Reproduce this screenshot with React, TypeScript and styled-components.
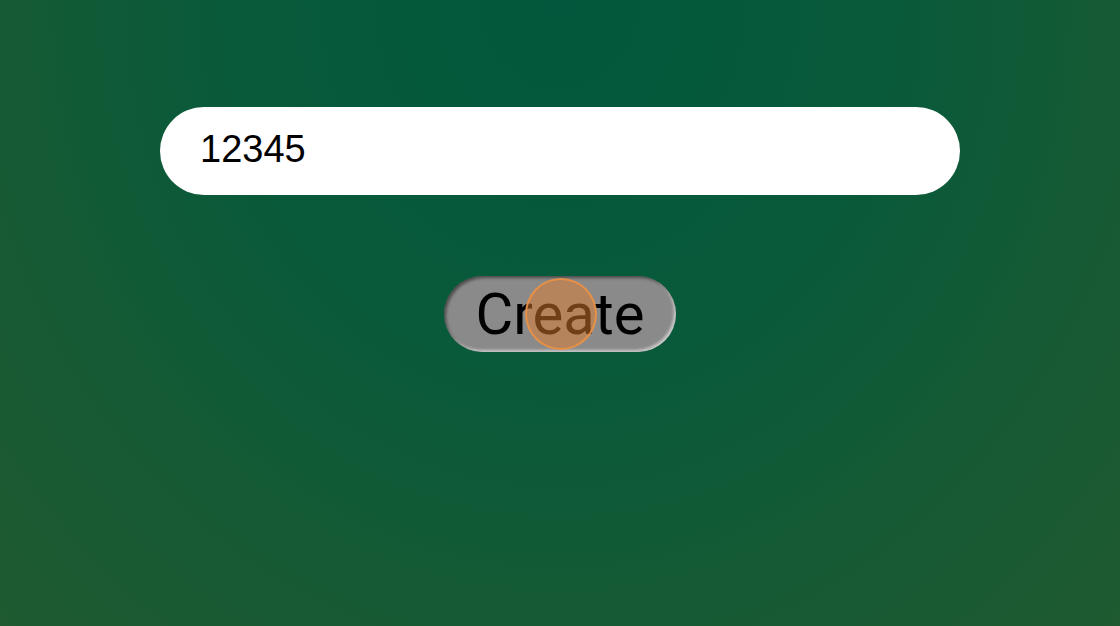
import styled, { createGlobalStyle } from 'styled-components';

const GlobalStyle = createGlobalStyle`
  html, body {
    margin: 0;
    padding: 0;
    height: 100%;
  }
  #root {
    height: 100%;
  }
`;

const Page = styled.main`
  height: 100vh;
  display: flex;
  flex-direction: column;
  align-items: center;
  padding-top: 107px;
  gap: 81px;
  box-sizing: border-box;
  background: radial-gradient(ellipse farthest-corner at 50% 0%, #02583c 0%, #085a3a 40%, #155a35 70%, #1f5a30 100%);
`;

const Input = styled.input`
  width: 800px;
  height: 88px;
  box-sizing: border-box;
  border: 0;
  outline: 0;
  border-radius: 44px;
  background: #fff;
  padding: 0 40px 4px;
  font-family: 'Liberation Sans', Arial, sans-serif;
  font-size: 38px;
  color: #000;
`;

const ButtonWrap = styled.div`
  position: relative;
`;

const Create = styled.button`
  width: 232px;
  height: 76px;
  border: 0;
  border-radius: 38px;
  background: #8a8a8a;
  box-shadow: inset 2px 2px 3px rgba(0, 0, 0, 0.45), inset -2px -2px 3px rgba(255, 255, 255, 0.55);
  font-family: Roboto, 'Noto Sans', sans-serif;
  font-size: 58px;
  line-height: 1;
  color: #000;
  padding: 0;
  cursor: pointer;
`;

const ClickMark = styled.span`
  position: absolute;
  left: 81px;
  top: 2px;
  width: 68px;
  height: 68px;
  border-radius: 50%;
  border: 2px solid rgba(235, 145, 70, 0.9);
  background: rgba(225, 125, 45, 0.5);
  pointer-events: none;
`;

const App = () => {
  return (
    <>
      <GlobalStyle />
      <Page>
        <Input defaultValue="12345" />
        <ButtonWrap>
          <Create type="button">Create</Create>
          <ClickMark />
        </ButtonWrap>
      </Page>
    </>
  );
};

export default App;
